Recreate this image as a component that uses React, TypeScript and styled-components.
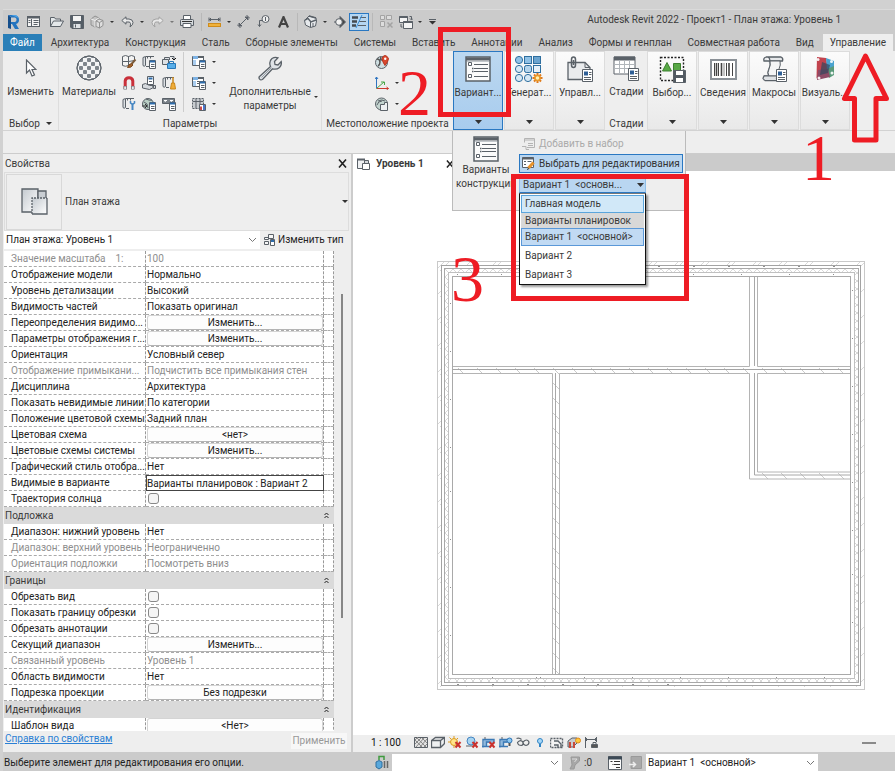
import React from 'react';
import styled, { createGlobalStyle, css } from 'styled-components';

const Global = createGlobalStyle`
  * { box-sizing: border-box; }
  html, body { margin: 0; height: 100%; }
  #root { height: 100%; }
  body, button, select, input, table {
    font-family: Roboto, "Open Sans", sans-serif;
    font-size: 10px;
    line-height: 14px;
    color: #3a3a3a;
  }
  button { border: 0; padding: 0; background: none; }
  svg { display: block; flex: none; }
`;

const INK = '#5a6168';
const RED = '#ee1c24';

/* ---------- shell ---------- */

const Shell = styled.div`
  position: relative;
  height: 100vh;
  min-height: 760px;
  display: flex;
  flex-direction: column;
  padding: 9px 0 0 3px;
  background: #d1d1d1;
  overflow: hidden;
`;
const Window = styled.div`
  flex: 1;
  min-height: 0;
  display: flex;
  flex-direction: column;
  background: #cbcbcb;
  border-top: 1px solid #dadada;
`;

/* ---------- quick access ---------- */

const QuickBar = styled.header`
  display: flex;
  align-items: center;
  height: 23px;
  padding-left: 3px;
`;
const QuickButton = styled.button<{ $w?: number; $on?: boolean }>`
  width: ${p => p.$w ?? 24}px;
  height: 18px;
  flex: none;
  display: flex;
  align-items: center;
  justify-content: center;
  ${p => p.$on && css`
    background: #b5d6f2;
    border: 1px solid #2a78c2;
  `}
`;
const Divider = styled.span`
  width: 1px;
  height: 18px;
  margin: 0 3px;
  background: #b8b8b8;
`;
const WindowTitle = styled.h1`
  flex: 1;
  margin: 0 54px 0 0;
  padding-bottom: 4px;
  text-align: right;
  white-space: nowrap;
  font-size: 10px;
  font-weight: 400;
  color: #3a3a3a;
`;

/* ---------- tabs ---------- */

const TabBar = styled.nav`
  display: flex;
  justify-content: space-between;
  max-width: 890px;
  height: 18px;
  padding-top: 1px;
  margin-right: 2px;
`;
const Tab = styled.button<{ $kind?: 'file' | 'active' }>`
  padding: 0 7px;
  white-space: nowrap;
  color: ${p => (p.$kind === 'file' ? '#fff' : '#3a3a3a')};
  background: ${p => (p.$kind === 'file' ? '#2a7fb8' : p.$kind === 'active' ? '#eee' : 'transparent')};
`;

/* ---------- ribbon ---------- */

const Ribbon = styled.section`
  position: relative;
  display: flex;
  height: 80px;
  background: #eee;
  border-bottom: 1px solid #d2d2d2;
`;
const Panel = styled.div<{ $w: number; $plain?: boolean }>`
  width: ${p => p.$w}px;
  flex: none;
  display: flex;
  flex-direction: column;
  ${p => !p.$plain && css`border-right: 1px solid #ddd;`}
`;
const PanelBody = styled.div<{ $start?: boolean }>`
  flex: 1;
  min-height: 0;
  display: flex;
  justify-content: ${p => (p.$start ? 'flex-start' : 'center')};
`;
const PanelTitle = styled.div`
  height: 14px;
  padding-top: 1px;
  display: flex;
  align-items: center;
  justify-content: center;
  gap: 6px;
  white-space: nowrap;
`;
const BigTool = styled.button<{ $w: number }>`
  width: ${p => p.$w}px;
  flex: none;
  display: flex;
  flex-direction: column;
  align-items: center;
  white-space: nowrap;
`;
const IconSlot = styled.span<{ $h?: number }>`
  height: ${p => p.$h ?? 34}px;
  display: flex;
  align-items: center;
  justify-content: center;
`;
const DropMark = styled.span`
  align-self: flex-end;
  padding: 0 0 18px 2px;
`;
const ToolGrid = styled.div<{ $cols: number }>`
  display: grid;
  grid-template-columns: repeat(${p => p.$cols}, 20px);
  grid-auto-rows: 21px;
  height: 63px;
`;
const SmallTool = styled.button<{ $w?: number }>`
  width: ${p => p.$w ?? 20}px;
  height: 21px;
  display: flex;
  align-items: center;
  justify-content: center;
  gap: 6px;
`;
const ToolRule = styled.span`
  width: 1px;
  height: 60px;
  margin: 1px 4px 0;
  background: #ccc;
`;
const ToolStack = styled.div<{ $after?: number }>`
  display: flex;
  flex-direction: column;
  margin-right: ${p => p.$after ?? 0}px;
`;
const Collapsed = styled.button<{ $on?: boolean }>`
  width: 50px;
  height: 79px;
  margin-right: 1px;
  flex: none;
  display: flex;
  flex-direction: column;
  align-items: center;
  white-space: nowrap;
  background: ${p => (p.$on ? 'linear-gradient(#bcd8f0, #a8ccee)' : 'linear-gradient(#fbfbfb, #e9e9e9)')};
  border: 1px solid ${p => (p.$on ? '#2a78c2' : '#dcdcdc')};
`;
const CollapsedLabel = styled.span`
  flex: 1;
  max-width: 48px;
`;
const ArrowSlot = styled.span`
  height: 9px;
  display: flex;
  align-items: flex-start;
`;

/* ---------- design options flyout ---------- */

const Anchor = styled.div`
  position: relative;
  flex: none;
`;
const Flyout = styled.div`
  position: absolute;
  z-index: 3;
  top: 80px;
  left: -1px;
  width: 234px;
  height: 80px;
  display: flex;
  background: #eee;
  border: 1px solid #bbb;
  border-top: 0;
`;
const FlyoutTool = styled.button`
  width: 66px;
  flex: none;
  display: flex;
  flex-direction: column;
  align-items: center;
  padding-top: 4px;
`;
const FlyoutColumn = styled.div`
  flex: 1;
  display: flex;
  flex-direction: column;
  align-items: flex-start;
  gap: 1px;
  padding-top: 3px;
`;
const FlyoutButton = styled.button<{ $on?: boolean }>`
  height: 19px;
  display: flex;
  align-items: center;
  gap: 4px;
  padding: 0 2px;
  white-space: nowrap;
  border: 1px solid ${p => (p.$on ? '#2a78c2' : 'transparent')};
  background: ${p => (p.$on ? '#b9d6f1' : 'transparent')};
  color: ${p => (p.$on ? '#333' : '#aaa')};
`;
const ComboWrap = styled.div`
  position: relative;
  width: 127px;
  margin-top: 2px;
`;
const Combo = styled.button`
  width: 100%;
  height: 17px;
  display: flex;
  align-items: center;
  justify-content: space-between;
  padding: 0 1px 0 3px;
  white-space: pre;
  background: #b9d6f1;
  border: 1px solid #8fbfe8;
  border-bottom-color: #2a78c2;
`;
const Options = styled.ul`
  position: absolute;
  top: 17px;
  left: 0;
  width: 127px;
  height: 92px;
  margin: 0;
  padding: 1px;
  list-style: none;
  background: #fff;
  border: 1px solid #111;
  border-top-color: #777;
  box-shadow: 2px 2px 2px rgba(0, 0, 0, 0.4);
`;
const Option = styled.li<{ $kind?: 'hover' | 'group' | 'current' }>`
  height: 19px;
  padding: 0 3px;
  line-height: 17px;
  white-space: pre;
  color: #3a3a3a;
  border: 1px solid transparent;
  ${p => p.$kind === 'hover' && css`height: 18px; line-height: 16px; background: #d1e8f8; border-color: #5aa5dc;`}
  ${p => p.$kind === 'group' && css`height: 15px; line-height: 13px; background: #d8d8d8;`}
  ${p => p.$kind === 'current' && css`height: 18px; line-height: 16px; background: #c1daf3; border-color: #5a98d8;`}
`;

/* ---------- workspace ---------- */

const OptionsBar = styled.div`
  height: 23px;
  flex: none;
  background: #eee;
  border-bottom: 1px solid #ccc;
`;
const Workspace = styled.main`
  flex: 1;
  min-height: 0;
  display: flex;
  background: #eee;
`;
const Palette = styled.aside`
  width: 350px;
  flex: none;
  display: flex;
  flex-direction: column;
  border-right: 2px solid #ccc;
  background: #eee;
`;
const PaletteHead = styled.div`
  height: 18px;
  display: flex;
  align-items: center;
  justify-content: space-between;
  padding: 1px 4px 0 2px;
`;
const TypeBox = styled.button`
  height: 59px;
  margin: 0 2px 0 1px;
  display: flex;
  align-items: center;
  gap: 3px;
  border: 1px solid #ddd;
`;
const Thumb = styled.span`
  width: 56px;
  height: 56px;
  margin-left: 1px;
  display: flex;
  align-items: center;
  justify-content: center;
  border: 1px solid #d8d8d8;
`;
const TypeName = styled.span`
  flex: 1;
  text-align: left;
`;
const InstanceRow = styled.div`
  height: 20px;
  display: flex;
  align-items: flex-start;
  padding-left: 1px;
`;
const SelectBox = styled.span<{ $w: number }>`
  width: ${p => p.$w}px;
  height: 18px;
  display: flex;
  align-items: center;
  background: #fff;
  padding-right: 3px;
`;
const PlainSelect = styled.select`
  flex: 1;
  appearance: none;
  border: 0;
  padding: 0 2px;
  background: transparent;
  color: #222;
`;
const EditType = styled.button`
  flex: 1;
  height: 17px;
  display: flex;
  align-items: center;
  gap: 3px;
  padding-left: 4px;
  white-space: nowrap;
  color: #222;
`;
const GridArea = styled.div`
  flex: 1;
  min-height: 0;
  display: flex;
  padding-left: 1px;
  overflow: hidden;
`;
const PropTable = styled.table`
  width: 330px;
  flex: none;
  align-self: flex-start;
  table-layout: fixed;
  border-collapse: separate;
  border-spacing: 0;
  background: #fff;
`;
const NameCell = styled.th<{ $muted?: boolean }>`
  height: 16px;
  padding: 0 0 0 7px;
  text-align: left;
  font-weight: 400;
  line-height: 14px;
  white-space: pre;
  overflow: hidden;
  color: ${p => (p.$muted ? '#8e8e8e' : '#222')};
  border-bottom: 1px dashed #aaa;
  border-right: 1px dashed #999;
`;
const ValueCell = styled.td<{ $muted?: boolean; $edit?: boolean }>`
  height: 16px;
  padding: 0 0 0 1px;
  line-height: 14px;
  white-space: nowrap;
  overflow: hidden;
  color: ${p => (p.$muted ? '#8e8e8e' : '#222')};
  border-bottom: 1px dashed #aaa;
  border-right: 1px dashed #999;
  ${p => p.$edit && css`border: 1px solid #444; padding: 0; line-height: 13px;`}
`;
const GroupCell = styled.th`
  height: 17px;
  padding: 0 5px 0 1px;
  font-weight: 400;
  background: #dadada;
`;
const GroupHead = styled.div`
  display: flex;
  justify-content: space-between;
  align-items: center;
  line-height: 15px;
`;
const ValueButton = styled.button`
  display: block;
  width: 176px;
  height: 15px;
  background: #fdfdfd;
  border: 1px solid #d4d4d4;
  border-bottom-color: #b4b4b4;
  border-radius: 3px;
  line-height: 13px;
  color: #222;
`;
const Check = styled.input`
  appearance: none;
  display: block;
  width: 11px;
  height: 11px;
  margin: 0 0 0 1px;
  border: 1px solid #888;
  border-radius: 3px;
  background: #f5f5f5;
`;
const ScrollTrack = styled.div`
  flex: 1;
  display: flex;
  justify-content: center;
  padding-top: 43px;
  padding-right: 1px;
`;
const ScrollThumb = styled.div`
  width: 2px;
  height: 324px;
  background: #868686;
`;
const PaletteFoot = styled.div`
  height: 21px;
  display: flex;
  align-items: center;
  justify-content: space-between;
  padding: 0 4px 2px 2px;
`;
const HelpLink = styled.a`
  padding-bottom: 3px;
  color: #2a7fd4;
`;
const Apply = styled.button`
  height: 16px;
  width: 56px;
  background: #f7f7f7;
  color: #999;
`;

/* ---------- document area ---------- */

const Document = styled.section`
  flex: 1;
  min-width: 0;
  display: flex;
  flex-direction: column;
`;
const DocTabs = styled.div`
  height: 17px;
  flex: none;
  display: flex;
  background: #cbcbcb;
`;
const DocTab = styled.div`
  width: 105px;
  display: flex;
  align-items: center;
  gap: 6px;
  padding: 2px 4px 0;
  background: #fff;
  font-weight: 700;
`;
const DocName = styled.span`
  flex: 1;
  font-size: 10px;
`;
const Canvas = styled.div`
  flex: 1;
  min-height: 0;
  padding: 90px 0 0 84px;
  background: #fff;
  overflow: hidden;
`;
const ViewBar = styled.div`
  height: 15px;
  margin-bottom: 2px;
  flex: none;
  display: flex;
  align-items: center;
  gap: 1px;
  padding: 0 19px 0 18px;
  background: #eee;
`;
const Scale = styled.button`
  width: 41px;
  white-space: nowrap;
  text-align: left;
  color: #111;
`;
const ViewTool = styled.button`
  width: 16px;
  height: 14px;
  flex: none;
  display: flex;
  align-items: center;
  justify-content: center;
`;
const Minus = styled.span`
  width: 14px;
  height: 2px;
  margin-left: auto;
  background: #8a8a8a;
`;

/* ---------- status ---------- */

const Status = styled.footer`
  height: 19px;
  flex: none;
  display: flex;
  align-items: center;
  padding-top: 2px;
  background: #cbcbcb;
`;
const Prompt = styled.span`
  width: 368px;
  padding: 1px 0 0 1px;
  flex: none;
  white-space: nowrap;
  color: #222;
`;
const StatusIcon = styled.span<{ $w: number }>`
  width: ${p => p.$w}px;
  flex: none;
  display: flex;
  justify-content: center;
`;
const Count = styled.span`
  width: 22px;
  flex: none;
`;

/* ---------- callouts ---------- */

const Frame = styled.div<{ $x: number; $y: number; $w: number; $h: number }>`
  position: absolute;
  z-index: 5;
  left: ${p => p.$x}px;
  top: ${p => p.$y}px;
  width: ${p => p.$w}px;
  height: ${p => p.$h}px;
  border: 5px solid ${RED};
  pointer-events: none;
`;
const Step = styled.span<{ $x: number; $y: number }>`
  position: absolute;
  z-index: 5;
  left: ${p => p.$x}px;
  top: ${p => p.$y}px;
  font: 66px/46px "Liberation Serif", serif;
  color: ${RED};
`;
const ArrowMark = styled.svg`
  position: absolute;
  z-index: 5;
  left: 841px;
  top: 52px;
`;

/* ---------- icons ---------- */

type IconProps = { w: number; h: number; vb?: string; children: React.ReactNode };
const Icon = ({ w, h, vb, children }: IconProps) => (
  <svg width={w} height={h} viewBox={vb ?? `0 0 ${w} ${h}`} fill="none" stroke={INK} aria-hidden="true">
    {children}
  </svg>
);

const Caret = ({ w = 4, c = '#333' }: { w?: number; c?: string }) => (
  <svg width={w} height={Math.ceil(w / 2)} viewBox="0 0 8 4" preserveAspectRatio="none" aria-hidden="true">
    <path d="M0 0h8L4 4z" fill={c} />
  </svg>
);
const Chevron = () => (
  <Icon w={9} h={6}><path d="M1 1l3.500 3.500L8 1" stroke="#777" /></Icon>
);
const Cross = ({ s = 9 }: { s?: number }) => (
  <Icon w={s} h={s} vb="0 0 9 9"><path d="M1 0.500l7 8M8 0.500l-7 8" stroke="#222" strokeWidth="1.600" /></Icon>
);

const RevitLogo = () => (
  <Icon w={13} h={16}>
    <g stroke="none">
      <path d="M1 1l3 2v12l-3-1z" fill="#164f8c" />
      <path d="M1 1h7q4 1 4 5 0 3-3 4l3 5H8l-3-5H4V3z" fill="#2474bf" />
      <path d="M4 3.500h4q1.500.500 1.500 2.200T8 8H4z" fill="#cbcbcb" />
      <path d="M4 1h5l3 3-2-.500-2-1z" fill="#4ea3e6" />
    </g>
  </Icon>
);
const HomeList = () => (
  <Icon w={13} h={13}>
    <rect x=".500" y="1.500" width="12" height="10" fill="#f5f5f5" />
    <path d="M1 2.500h11" strokeWidth="2" />
    <path d="M4.500 4v7M6.500 5.500h5M6.500 7.500h5M6.500 9.500h4M1.500 5.500h2M1.500 7.500h2" />
  </Icon>
);
const OpenFolder = () => (
  <Icon w={14} h={12}><path d="M.500 10.500V1.500h4l1 1.500h5v2M.500 10.500L3.500 5h10l-3 5.500z" fill="#e4e8ea" /></Icon>
);
const Save = () => (
  <Icon w={14} h={14}>
    <path d="M.500.500h13v13H2l-1.500-1.500z" fill="#555e67" />
    <rect x="3" y="1" width="8" height="5" fill="#f4f4f4" stroke="none" />
    <rect x="3.500" y="9" width="7" height="4" fill="#dfe3e6" stroke="none" />
    <path d="M5.500 9.500v3" />
  </Icon>
);
const Cubes = () => (
  <Icon w={14} h={14}>
    <g stroke="#929292">
      <path d="M1 4l4-3 4 2v6l-4 3-4-2z" fill="#c4c4c4" />
      <path d="M1 4l4 1.500L9 3M5 5.500V12" stroke="#eee" />
      <path d="M6 6l3-2 4 1.500v5L9.500 13 6 11.500z" fill="#dedede" />
      <path d="M6 6l3.500 1.500L13 5.500M9.500 7.500V13" />
    </g>
  </Icon>
);
const Undo = ({ c = INK, flip }: { c?: string; flip?: boolean }) => (
  <Icon w={13} h={12}>
    <path
      transform={flip ? 'matrix(-1 0 0 1 13 0)' : undefined}
      d="M5 .800L.800 4.500 5 8.200V6h3q2.500.300 1 5 3-2 3-4.500 0-3-4-3.500H5z"
      fill="#e8e8e8" stroke={c}
    />
  </Icon>
);
const Printer = () => (
  <Icon w={14} h={13}>
    <path d="M3.500 5V.500h7V5" fill="#fff" />
    <path d="M.500 5.500q0-1 1-1h11q1 0 1 1v5H.500z" fill="#d6dadd" />
    <path d="M3 8.500h8v4H3z" fill="#fff" />
    <path d="M2 6.500h10" stroke="#333" />
  </Icon>
);
const Measure = () => (
  <Icon w={13} h={10}>
    <path d="M1 2.500h11M1 .500v4M12 .500v4M3 1L1.500 2.500 3 4M10 1l1.500 1.500L10 4" />
    <rect x=".500" y="6.500" width="12" height="3" fill="#f0b23c" stroke="#cf8c1c" />
  </Icon>
);
const AlignDim = () => (
  <Icon w={13} h={13}><path d="M2 11L11 2M0 9.500l3.500 3.500M9.500 0L13 3.500" /><path d="M2 8v3h3zM11 2H8l3 3z" fill={INK} /></Icon>
);
const TagIcon = () => (
  <Icon w={13} h={13}><circle cx="8.500" cy="4" r="3.500" fill="#eee" /><path d="M8.500 2v4M5 5.500H2.500v6M1 9.500l1.500 2L4 9.500" /></Icon>
);
const TextA = () => (
  <Icon w={11} h={12}><path d="M1 11.500L5.500 1 10 11.500M2.500 8h6" stroke="#444" strokeWidth="2.200" /></Icon>
);
const HouseIcon = () => (
  <Icon w={13} h={13}>
    <path d="M.500 5.500L5 1l7 2 .500 3-1 5-5 1.500L1.500 10z" fill="#e6e9ec" />
    <path d="M.500 5.500l3.500-2 3 3.500L12 5M5 1l7 2" strokeWidth="1.400" /><path d="M6.500 7v5.500M9 8v4" />
  </Icon>
);
const SectionMark = () => (
  <Icon w={12} h={12}><path d="M6 .500l5.500 5.500L6 11.500z" fill="#444" /><circle cx="5" cy="6" r="3.300" fill="#f2f2f2" /><path d="M0 6h2" /></Icon>
);
const ThinLines = () => (
  <Icon w={14} h={13}>
    <path d="M0 2.500h6M0 6.500h5M0 10.500h4" strokeWidth="2.500" stroke="#444b52" />
    <path d="M8 2.500h6M7 6.500h7M6 10.500h8" />
    <path d="M10 0L4 13" stroke="#3a8fd8" />
  </Icon>
);
const CloseHidden = () => (
  <Icon w={13} h={13}>
    <g stroke="#a3a3a3">
      <path d="M.500.500h4v4h-4zM6.500.500h5v4h-5zM.500 6.500h4v5h-4z" fill="#ddd" />
      <path d="M7.500 7.500l5 5M12.500 7.500l-5 5" strokeWidth="1.500" />
    </g>
  </Icon>
);
const SwitchWin = () => (
  <Icon w={14} h={14}>
    <path d="M.500 1.500h8v6h-8z" fill="#f4f4f4" /><path d="M.500 2h8" strokeWidth="2" />
    <path d="M4.500 6.500h9v7h-9z" fill="#f4f4f4" /><path d="M4.500 7h9" strokeWidth="2" />
    <path d="M10.500 1.500h2v3M11 3.500l1.500 1.500L14 3.500M2 9v3h1.500" />
  </Icon>
);

const Cursor = () => (
  <Icon w={12} h={19}><path d="M1.500 1v13l3-3 2.500 6 2.500-1-2.500-5.500H11z" fill="#fff" strokeWidth="1.200" /></Icon>
);
const Sphere = () => (
  <Icon w={26} h={26}>
    <defs><clipPath id="ball"><circle cx="13" cy="13" r="12" /></clipPath></defs>
    <circle cx="13" cy="13" r="12" fill="#f3f4f5" />
    <g clipPath="url(#ball)" stroke="none" fill="#7d848b">
      {[0, 1, 2, 3, 4, 5, 6].map(r =>
        [0, 1, 2, 3].map(c => {
          const xs = [0, 3, 7, 11, 15, 19, 23, 26];
          const i = c * 2 + (r % 2);
          return i < 7 && <rect key={`${r}-${c}`} x={xs[i]} y={xs[r]} width={xs[i + 1] - xs[i]} height={xs[r + 1] - xs[r]} rx="1" />;
        }),
      )}
    </g>
    <circle cx="13" cy="13" r="12" />
  </Icon>
);
const sheet = <><path d="M7.500 5.500h6v8h-6z" fill="#fff" /><path d="M8 6.500h5" stroke="#2e6cab" strokeWidth="2" /><path d="M9 9.500h3.500M9 11.500h3.500" /></>;
const ruler = <path d="M1 2.500l2.500-1v9q-1.500 1.500-2.500 0zM4 1.500h8M5.500 1.500v2M8.500 1.500v2M4 11.500h3" fill="#dce0e4" />;
const ObjStyles = () => (
  <Icon w={15} h={15}>
    <path d="M.500 2.500q3-2 6 0v5h-6zM6.500 2.500q3-2 6 0v4l-6 1zM.500 7.500h6v4q-3 1.500-6 0z" fill="#f3f3f3" />
    <path d="M13.500 5.500L9.500 10" stroke="#7c5a3a" strokeWidth="2" />
    <path d="M9.500 9.500q-3 .500-4 4 4 .500 5.500-2.500z" fill="#a3622c" stroke="#7c4a20" />
  </Icon>
);
const ProjInfo = () => <Icon w={14} h={14}>{ruler}{sheet}</Icon>;
const ProjParams = () => (
  <Icon w={14} h={14}>
    <path d="M.500 4.500h6v5h-6zM2.500 4V2.500h5V5M8 1.500h4v3" fill="#dde1e5" />
    <path d="M10 3l2 2 2-2" stroke="#111" />
    <path d="M5.500 8.500h8v5h-8z" fill="#58aee9" stroke="#2878b8" /><path d="M7.500 8.500v-2h4v2" stroke="#2878b8" />
  </Icon>
);
const Magnet = () => (
  <Icon w={12} h={14}>
    <path d="M2.200 13V5Q2.500 1.800 6 1.800T9.800 5v8" stroke="#c9303a" strokeWidth="3" />
    <path d="M2.200 10V13.500M9.800 10V13.500" stroke="#6d747b" strokeWidth="3.400" />
    <path d="M2.200 10.500V13M9.800 10.500V13" stroke="#e6e9eb" strokeWidth="2" />
  </Icon>
);
const SharedParams = () => (
  <Icon w={14} h={14}>
    <path d="M5.500.500h6v8h-6z" fill="#fff" /><path d="M6.500 2.500h4" stroke="#2e6cab" strokeWidth="2" /><path d="M7 5.500h3" />
    <path d="M.500 8.500l3-1 4 2h4v2l-4 2-7-1.500zM10.500 9.500h3v3h-2z" fill="#d5d9dd" />
  </Icon>
);
const Purge = () => (
  <Icon w={14} h={14}>{ruler}<path d="M9.500 7h3l1 6H8.500z" fill="#f0ad38" stroke="#c9861a" /><path d="M11 1v6" stroke="#c9861a" strokeWidth="1.500" /></Icon>
);
const Units = () => (
  <Icon w={14} h={14}>{ruler}<path d="M10.500 7v6" stroke="#4686c2" strokeWidth="2" /><path d="M8.500 4v2q2 2 4 0V4" stroke="#4686c2" strokeWidth="1.500" /></Icon>
);
const Transfer = () => (
  <Icon w={14} h={14}><circle cx="6" cy="7" r="5.500" fill="#b9cfc4" /><path d="M2 5q4 1 4 6M4 2q4 2 6 1" /><path d="M0 9h4M3 7l2 2-2 2" stroke="#333" />{sheet}</Icon>
);
const Templates = () => (
  <Icon w={14} h={14}><path d="M.500 1.500h12v5H.500z" fill="#7a8188" /><path d="M2 3.500h3M8 3.500h3M3 5l1-2M9 5l1-2" stroke="#fff" />{sheet}</Icon>
);
const TableTool = ({ v }: { v: number }) => (
  <Icon w={14} h={14}>
    {v < 2 ? (
      <>
        <path d="M.500 1.500h11v9H.500z" fill="#fff" />
        <path d="M1 2.500h5" stroke="#7db2e4" strokeWidth="3" />
        <path d="M6 2h6" strokeWidth="2" /><path d="M2.500 5v5" stroke="#a9cdf0" strokeWidth="3" />
        {v === 1 && <path d="M5 5.500h3M5 7.500h2" />}
        {sheet}
      </>
    ) : (
      <>
        <path d="M.500 1.500h11v10H.500z" fill="#c8ccd0" strokeDasharray="2 1" /><path d="M1 4.500h10M4 2v9M8 2v9" />
        <path d="M7.500 7.500h6v6h-6z" fill="#fff" /><path d="M9 13V9.500" stroke="#c94a4a" strokeWidth="2" /><path d="M12 13v-5" stroke="#4a74c9" strokeWidth="2" />
      </>
    )}
  </Icon>
);
const Wrench = () => (
  <Icon w={24} h={25}>
    <path d="M1.500 20.500L12.500 10.500Q10.500 5.500 14 2.500 17 .500 20 1.800L16.500 5.500l.500 3 3 .500 3.200-3.500Q24 9 21.500 11.500q-3 2.500-7 1.300L4.500 23.500q-2 1-3-.500-1-1.200 0-2.500z" fill="#dfe3e7" strokeWidth="1.300" />
    <path d="M3.500 21.500L13.500 11.500" stroke="#9aa1a8" />
  </Icon>
);
const Globe = () => (
  <Icon w={14} h={14}>
    <circle cx="6.500" cy="7.500" r="6" fill="#cfdfe2" /><path d="M2 4q3 0 3 3t-2 4M6 2q-1 3 1 3" stroke="#555" strokeWidth="1.500" />
    <path d="M10 10.500Q7 6 7 3.500 8 .500 10 .500T13.500 3.500Q13.500 6 10 10.500z" fill="#d9482e" stroke="#b83520" /><circle cx="10.200" cy="3.800" r="1.200" fill="#fff" stroke="none" />
  </Icon>
);
const Axes = () => (
  <Icon w={14} h={14}>
    <path d="M1.500 12V1M0 3l1.500-2L3 3" stroke="#2f74c0" /><path d="M1.500 12.500h12M11.500 11l2 1.500-2 1.500" stroke="#cc3b2f" />
    <path d="M1.500 12.500L9 6M6 6h3.500v3" stroke="#49a84a" />
  </Icon>
);
const PositionIcon = () => (
  <Icon w={14} h={14}><circle cx="6.500" cy="7" r="6" fill="#c3d4cf" /><path d="M2 8q1-4 5-4M3 4q4-2 7 0" /><path d="M5.500 7.500h4v-2h3v8h-7z" fill="#eef0f2" /></Icon>
);

const OptionSheet = ({ w = 26, h = 26 }: { w?: number; h?: number }) => (
  <Icon w={w} h={h} vb="0 0 26 26">
    <path d="M1 1h24v24H1z" fill="#fbfbfb" strokeWidth="1.500" />
    <path d="M1 3h24" strokeWidth="3" /><path d="M2 5.500h22" stroke="#c3c8cc" />
    <path d="M3.500 6.500h3v3h-3zM3.500 18.500h3v3h-3z" fill="#fff" />
    <path d="M9 8.500h14M9 12.500h14M9 15.500h14M9 20.500h14" strokeWidth="1.200" />
    <path d="M7 12.500h1.500M7 15.500h1.500" strokeWidth="1.500" />
  </Icon>
);
const StatusSheet = () => (
  <Icon w={14} h={14}>
    <path d="M.500.500h13v13H.500z" fill="#fbfbfb" /><path d="M0 2h14" strokeWidth="3" stroke="#3c4a56" />
    <path d="M2.500 5.500h2M6 5.500h6M6 8.500h6M8 11.500h4M4.500 8.500h1" stroke="#333" />
  </Icon>
);
const Generative = () => (
  <Icon w={28} h={27}>
    <g fill="#8fc1e6" stroke="#2f6f9f">
      {[4, 13].flatMap(x => [4, 13, 22].map(y => <circle key={`${x}${y}`} cx={x} cy={y} r="3.600" fill={y > 4 ? '#d6e8f5' : '#8fc1e6'} />))}
      <rect x="9.500" y=".500" width="7" height="7" />
      <rect x="18.500" y=".500" width="7" height="7" fill="#6ba4cf" />
      <rect x="18.500" y="9.500" width="7" height="7" fill="#e6f0f8" />
      <rect x="9.500" y="9.500" width="7" height="7" rx="2" fill="#b4d4ec" />
    </g>
    <g stroke="#e07b1c" strokeWidth="2"><path d="M22.500 17v10M17.500 22h10M19 18.500l7 7M26 18.500l-7 7" /><circle cx="22.500" cy="22" r="2.500" fill="#fff2b0" stroke="#e89a2c" strokeWidth="1.500" /></g>
  </Icon>
);
const report = <><path d="M15.500 13.500h10v12h-10z" fill="#fff" /><path d="M17 15.500h4v4h-4z" fill="#2e5f96" stroke="none" /><path d="M22 16.500h2.500M22 18.500h2.500M17 21.500h7M17 23.500h7" /></>;
const ManageProject = () => (
  <Icon w={27} h={27}>
    <path d="M1 6.500h17l5 5v12H1z" fill="#e9ebed" strokeWidth="1.300" /><path d="M18 6.500v5h5" />
    <path d="M4.500 9V3.500Q4.500 1 6.500 1t2 2.500V9q0 2.500-2 2.500T4.500 9zM6.500 4v5" strokeWidth="1.500" />
    {report}
  </Icon>
);
const Phases = () => (
  <Icon w={27} h={27}>
    <path d="M1 2h21v17H1z" fill="#fff" /><path d="M1 3.500h21" strokeWidth="4" />
    <path d="M1 9.500h21M1 13.500h21M6.500 5v14M11.500 5v14M16.500 5v14" stroke="#b0b5ba" />
    {report}
  </Icon>
);
const Selection = () => (
  <Icon w={27} h={27}>
    <path d="M1.500 1.500h23v23h-23z" stroke="#222" strokeWidth="1.400" strokeDasharray="2 1.500" />
    <path d="M8 6.500l4.500 8.500h-9z" fill="#58a846" stroke="#3d8030" /><path d="M14.500 7.500h7v7h-7z" fill="#58a846" stroke="#3d8030" />
    <path d="M14.500 14.500h12v12h-12z" fill="#525a62" /><path d="M17 15h7v4h-7zM17 22h7v4h-7z" fill="#fff" stroke="none" />
  </Icon>
);
const Barcode = () => (
  <Icon w={27} h={21}>
    <path d="M1 1h25v19H1z" fill="#fff" stroke="#8b9197" strokeWidth="2" />
    <path d="M4.500 4v13M8.500 4v13M16.500 4v13M22.500 4v13" stroke="#444" /><path d="M6.500 4v13M11.500 4v13M19 4v13" stroke="#444" strokeWidth="1.600" /><path d="M14 4v13" stroke="#888" />
  </Icon>
);
const Macros = () => (
  <Icon w={27} h={27}>
    <path d="M5 1h15q2.500 1 1.500 4H9q1 4-1 8t0 7H3q-2 3 1 4.500h12M5 1Q2 2 3 5h6M9 5q0-3-2-4" fill="#e6e8ea" strokeWidth="1.300" />
    <path d="M9 5h10q1 4-1 8l-2 7H8q-2-3 0-7t1-8z" fill="#f4f5f6" />
    <path d="M3 20h13q-1.500 3 .500 4.500H4Q1 23 3 20z" fill="#dfe2e5" />
    {report}
  </Icon>
);
const Dynamo = () => (
  <Icon w={21} h={26}>
    <g stroke="none">
      <path d="M2 1l9 1 2 11-10 11-1.500-2z" fill="#c2434e" /><path d="M11 2l8 3v6l-7 3z" fill="#4aa3cf" /><path d="M12 13l7-3v9l-5 3z" fill="#5a9a7a" />
      <path d="M2 24l1-10 10-1 2 8z" fill="#8d4a66" /><path d="M7 6l8 3-2 8-8 2z" fill="#33465c" opacity=".700" />
      <g fill="#fff" opacity=".900"><circle cx="3" cy="3.500" r="1.500" /><circle cx="16.500" cy="5.500" r="1.500" /><circle cx="17" cy="17" r="1.500" /><circle cx="4" cy="22" r="1.500" /></g>
    </g>
  </Icon>
);

const AddToSet = () => (
  <Icon w={13} h={12}><g stroke="#b4b4b4"><path d="M2.500.500h10v9H5M2.500.500v4M2.500 2h10M6 5.500h5M6 7.500h5" /><path d="M0 8.500h4v3h3" /></g></Icon>
);
const PickToEdit = () => (
  <Icon w={13} h={13}>
    <path d="M.500.500h11v10H.500z" fill="#fff" /><path d="M.500 1.500h11" strokeWidth="2" /><path d="M2 4.500h2M5.500 4.500h4M2 7.500h2" />
    <path d="M11.500 5.500L6.500 11" stroke="#e8932c" strokeWidth="3" /><path d="M5 12.500l2-1" stroke="#333" />
  </Icon>
);
const PlanThumb = () => (
  <Icon w={27} h={27}>
    <defs><linearGradient id="pl" x1="0" y1="0" x2="1" y2="1"><stop offset="0" stopColor="#c3c9cf" /><stop offset="1" stopColor="#fff" /></linearGradient></defs>
    <path d="M1 1h16v23H1z" fill="url(#pl)" strokeWidth="1.300" /><path d="M17 3h8v8h-8z" fill="#c9ced3" strokeWidth="1.300" />
    <path d="M11 10h15v16H11z" fill="url(#pl)" stroke="none" />
    <path d="M11 26V10h15" strokeDasharray="2 1" strokeWidth="1.300" /><path d="M26 10v16H11" strokeWidth="1.300" />
  </Icon>
);
const PlanTab = () => (
  <Icon w={13} h={12}><path d="M.500 1.500h7v9h-7z" fill="#eef0f2" /><path d="M7.500 2.500h4v4h-4z" fill="#d4d8dc" /><path d="M5.500 5.500h7v6h-7z" fill="#fff" /><path d="M0 1.500h8" strokeWidth="2" /></Icon>
);
const TypeIcon = () => (
  <Icon w={11} h={12}><path d="M.500 3.500h4v2h-4zM.500 7.500h4v3h-4zM4.500.500h5v4h-5z" fill="#f6f6f6" /><path d="M6.500 5.500h4v6h-4z" fill="#fff" /><path d="M7 7h3" stroke="#2e6cab" strokeWidth="2" /></Icon>
);
const GroupChevron = () => (
  <Icon w={5} h={7}><path d="M.500 3L2.500 1l2 2M.500 6l2-2 2 2" stroke="#222" /></Icon>
);

const redX = <path d="M7.500 6l5 5.500M12.500 6l-5 5.500" stroke="#c9302c" strokeWidth="2" />;
const crop = <><path d="M1 4h11v3H5v4H2V5" fill="#8fb9de" stroke="none" /><path d="M1 11.500V3.500h11V6M0 10.500h9M4.500 11V6H8" stroke="#3c79b4" strokeWidth="1.400" /><path d="M3 1v2" /></>;
const bulb = <><circle cx="10.500" cy="4.500" r="2.500" fill="#8cc8f2" stroke="#2f74b5" /><path d="M10.500 7v3" stroke="#555" strokeWidth="2" /></>;
const viewIcons: React.ReactNode[] = [
  <><path d="M.500 1.500h13v10H.500z" fill="#e2e2e2" /><path d="M1 4l3-3M1 8l6-6M2 11l8-9M6 11l7-8M10 11l3-3M3 2l9 9M1 4l7 7M8 2l5 5" stroke="#8a8a8a" /></>,
  <path d="M.500 4.500l4-3h9v6l-4 4h-9zM.500 4.500h9l4-3M9.500 4.500v7" fill="#eef0f1" strokeWidth="1.300" />,
  <><circle cx="6" cy="6" r="3.500" fill="#ffe48a" stroke="#dd9a1a" /><path d="M6 0v2M6 10v2M0 6h2M1.500 1.500L3 3M10 2L9 3" stroke="#dd9a1a" />{redX}</>,
  <><circle cx="6" cy="5" r="4" fill="#a8d4f0" stroke="#4686c2" /><path d="M1 10h7" />{redX}</>,
  <>{crop}{redX}</>,
  <>{crop}{bulb}</>,
  <path d="M.500 2.500q3-1 5 1M1.500 6.500q2-3 5-1 1.500 3-1 4-3.500 0-4-3zM7 6q4-4 6 0 0 3-3 3.500Q7 9 7 6" strokeWidth="1.200" />,
  <><circle cx="7" cy="5" r="2.500" fill="#a8d8f8" stroke="#2f84c5" /><path d="M7 8v3" stroke="#2f84c5" strokeWidth="2" /></>,
  <><path d="M.500 2.500h12v9H.500z" fill="#f3f3f3" strokeWidth="1.400" strokeDasharray="2 1" /><path d="M4 5h4l3 3v4M4 9h4v3" strokeWidth="1.400" /></>,
  <><path d="M1 5l4-3h5v5l-4 4H1z" fill="#c8ccd0" /><path d="M3 6v6M7 6v6" stroke="#c94a3a" strokeWidth="2" /><circle cx="11" cy="4.500" r="2.500" fill="#ffc93c" stroke="#e08a1a" /></>,
  <><path d="M1 3.500h12M1.500 1v11M12.500 1v5M3 2L1.500 3.500 3 5M11 2l1.500 1.500L11 5" /><path d="M7.500 8.500h6v3h-6z" fill="#555" /><path d="M9 8V6.500h3V8" /></>,
];
const StatusHand = () => (
  <Icon w={14} h={15}><path d="M1 7l3-1.500L7 7v5l-3 2-3-2z" fill="#59a8dc" stroke="#2f6f9f" /><path d="M4 5V1.500h5V5" stroke="#3f9a3f" strokeWidth="1.500" /><path d="M9.500 6v7M12.500 6v7" stroke="#666" strokeWidth="1.500" /></Icon>
);
const FilterOff = () => (
  <Icon w={13} h={14}><path d="M4 1h8.500v4L8 9l-1 4H3l2-4z" fill="#a7a7a7" stroke="#999" /><path d="M5 3h5L7.500 6" stroke="#ddd" /></Icon>
);
const PickStatus = () => (
  <Icon w={13} h={13}><path d="M2 .500h10.500v12H2z" fill="#a9a9a9" stroke="#9a9a9a" /><path d="M0 8.500h6M4 6l2.500 2.500L4 11" stroke="#eee" strokeWidth="1.500" /></Icon>
);

const FloorPlan = () => {
  const rings: [number, string][] = [[0.5, '#c9c9c9'], [4.5, '#a3a3a3'], [7.5, '#a8a8a8'], [11.5, '#c0c0c0'], [15.5, '#a9a9a9']];
  return (
    <svg width="429" height="430" viewBox="0 0 429 430" fill="none" role="img" aria-label="План этажа">
      <defs>
        <pattern id="brick" width="26" height="26" patternUnits="userSpaceOnUse">
          <path d="M0 8L8 0M3 10l9-9M14 24l9-9M17 26l9-9" stroke="#cfcfcf" strokeWidth=".800" />
        </pattern>
        <pattern id="wool" width="8" height="8" patternUnits="userSpaceOnUse">
          <path d="M0 0l8 8M8 0L0 8" stroke="#cfcfcf" strokeWidth=".800" />
        </pattern>
        <pattern id="thin" width="19" height="15" patternUnits="userSpaceOnUse">
          <path d="M2 2l7 7" stroke="#bcbcbc" strokeWidth=".800" />
        </pattern>
      </defs>
      <path fillRule="evenodd" fill="url(#brick)" d="M0 0h429v430H0zM4 4v421h420V4z" />
      <path fillRule="evenodd" fill="url(#wool)" d="M7 7h415v415H7zM11 11v407h406V11z" />
      {rings.map(([o, c], i) => (
        <rect key={i} x={o} y={o} width={428 - 2 * o + (i > 1 ? 1 : 0)} height={429 - 2 * o} stroke={c} />
      ))}
      <g fill="#8f8f8f">
        {Array.from({ length: 34 }, (_, i) => {
          const t = 20 + ((i * 83) % 380);
          return <React.Fragment key={i}>
            {i % 4 === 0 && <rect x={t} y={13} width="1" height="1" />}
            {i % 4 === 1 && <rect x={t} y={416} width="1" height="1" />}
            {i % 4 === 2 && <rect x={13} y={t} width="1" height="1" />}
            {i % 4 === 3 && <rect x={415} y={t} width="1" height="1" />}
            {i % 5 === 0 && <rect x={t} y={423} width="2" height="1" />}
            {i % 5 === 2 && <rect x={t} y={5} width="2" height="1" />}
          </React.Fragment>;
        })}
      </g>
      <g fill="url(#thin)">
        <path d="M16 105h397v7H16zM115 112h8v301h-8zM312 16h9v89h-9zM312 112h9v106h-9zM312 211h101v7H312z" />
      </g>
      <g stroke="#b4b4b4">
        <path d="M16 105.500h296.500V16M320.500 16v89.500H413M16 112.500h99.500V413M122.500 413V112.500h190v105.500H413M413 112.500h-92.500v98.500H413" />
        <path d="M16 108.500h397" stroke="#a5a5a5" /><path d="M118.500 112v301M317.500 16v89M317.500 112v102H413" stroke="#a8a8a8" />
      </g>
    </svg>
  );
};

/* ---------- data ---------- */

type Row = { group?: string; name?: string; value?: string; kind?: 'button' | 'check' | 'edit'; muted?: boolean };
const rows: Row[] = [
  { name: 'Значение масштаба    1:', value: '100', muted: true },
  { name: 'Отображение модели', value: 'Нормально' },
  { name: 'Уровень детализации', value: 'Высокий' },
  { name: 'Видимость частей', value: 'Показать оригинал' },
  { name: 'Переопределения видимо...', value: 'Изменить...', kind: 'button' },
  { name: 'Параметры отображения г...', value: 'Изменить...', kind: 'button' },
  { name: 'Ориентация', value: 'Условный север' },
  { name: 'Отображение примыкани...', value: 'Подчистить все примыкания стен', muted: true },
  { name: 'Дисциплина', value: 'Архитектура' },
  { name: 'Показать невидимые линии', value: 'По категории' },
  { name: 'Положение цветовой схемы', value: 'Задний план' },
  { name: 'Цветовая схема', value: '<нет>', kind: 'button' },
  { name: 'Цветовые схемы системы', value: 'Изменить...', kind: 'button' },
  { name: 'Графический стиль отобра...', value: 'Нет' },
  { name: 'Видимые в варианте', value: 'Варианты планировок : Вариант 2', kind: 'edit' },
  { name: 'Траектория солнца', kind: 'check' },
  { group: 'Подложка' },
  { name: 'Диапазон: нижний уровень', value: 'Нет' },
  { name: 'Диапазон: верхний уровень', value: 'Неограниченно', muted: true },
  { name: 'Ориентация подложки', value: 'Посмотреть вниз', muted: true },
  { group: 'Границы' },
  { name: 'Обрезать вид', kind: 'check' },
  { name: 'Показать границу обрезки', kind: 'check' },
  { name: 'Обрезать аннотации', kind: 'check' },
  { name: 'Секущий диапазон', value: 'Изменить...', kind: 'button' },
  { name: 'Связанный уровень', value: 'Уровень 1', muted: true },
  { name: 'Область видимости', value: 'Нет' },
  { name: 'Подрезка проекции', value: 'Без подрезки', kind: 'button' },
  { group: 'Идентификация' },
  { name: 'Шаблон вида', value: '<Нет>', kind: 'button' },
];
const tabs = ['Архитектура', 'Конструкция', 'Сталь', 'Сборные элементы', 'Системы', 'Вставить', 'Аннотации', 'Анализ', 'Формы и генплан', 'Совместная работа', 'Вид'];
const gridTools = [ObjStyles, ProjInfo, ProjParams, Magnet, SharedParams, Purge, Units, Transfer, Templates];

const CollapsedPanel = ({ label, icon, on }: { label: string; icon: React.ReactNode; on?: boolean }) => (
  <Collapsed $on={on}>
    <IconSlot>{icon}</IconSlot>
    <CollapsedLabel>{label}</CollapsedLabel>
    <ArrowSlot><Caret w={7} /></ArrowSlot>
  </Collapsed>
);

const PropertyRow = ({ row, id }: { row: Row; id: string }) => {
  if (row.group) {
    return <tr><GroupCell colSpan={3}><GroupHead>{row.group}<GroupChevron /></GroupHead></GroupCell></tr>;
  }
  return (
    <tr>
      <NameCell scope="row" id={id} $muted={row.muted}>{row.name}</NameCell>
      <ValueCell $muted={row.muted} $edit={row.kind === 'edit'}>
        {row.kind === 'button' && <ValueButton aria-describedby={id}>{row.value}</ValueButton>}
        {row.kind === 'check' && <Check type="checkbox" aria-labelledby={id} />}
        {(!row.kind || row.kind === 'edit') && row.value}
      </ValueCell>
      <ValueCell />
    </tr>
  );
};

export default function App() {
  return (
    <Shell>
      <Global />
      <Window>
        <QuickBar>
          <QuickButton $w={15} aria-label="Revit"><RevitLogo /></QuickButton>
          <QuickButton $w={25} aria-label="Главная"><HomeList /></QuickButton>
          <QuickButton $w={21} aria-label="Открыть"><OpenFolder /></QuickButton>
          <QuickButton $w={20} aria-label="Сохранить"><Save /></QuickButton>
          <QuickButton $w={20} aria-label="Синхронизация"><Cubes /></QuickButton>
          <QuickButton $w={10} aria-label="Ещё"><Caret /></QuickButton>
          <QuickButton $w={20} aria-label="Отменить"><Undo /></QuickButton>
          <QuickButton $w={9} aria-label="Список отмены"><Caret /></QuickButton>
          <QuickButton $w={22} aria-label="Повторить"><Undo flip c="#a3a3a3" /></QuickButton>
          <QuickButton $w={8} aria-label="Список повтора"><Caret c="#777" /></QuickButton>
          <QuickButton $w={22} aria-label="Печать"><Printer /></QuickButton>
          <Divider />
          <QuickButton $w={18} aria-label="Измерить"><Measure /></QuickButton>
          <QuickButton $w={11} aria-label="Способы измерения"><Caret /></QuickButton>
          <QuickButton $w={19} aria-label="Размер"><AlignDim /></QuickButton>
          <QuickButton $w={20} aria-label="Марка"><TagIcon /></QuickButton>
          <QuickButton $w={21} aria-label="Текст"><TextA /></QuickButton>
          <Divider />
          <QuickButton $w={18} aria-label="3D вид"><HouseIcon /></QuickButton>
          <QuickButton $w={11} aria-label="Список видов"><Caret /></QuickButton>
          <QuickButton $w={19} aria-label="Разрез"><SectionMark /></QuickButton>
          <QuickButton $w={20} $on aria-label="Тонкие линии"><ThinLines /></QuickButton>
          <Divider />
          <QuickButton $w={20} aria-label="Закрыть скрытые"><CloseHidden /></QuickButton>
          <QuickButton $w={20} aria-label="Переключить окна"><SwitchWin /></QuickButton>
          <QuickButton $w={8} aria-label="Список окон"><Caret /></QuickButton>
          <QuickButton $w={16} aria-label="Настроить панель">
            <Icon w={7} h={7}><path d="M0 1.500h7" /><path d="M0 3h7L3.500 6.500z" fill="#333" stroke="none" /></Icon>
          </QuickButton>
          <WindowTitle>Autodesk Revit 2022 - Проект1 - План этажа: Уровень 1</WindowTitle>
        </QuickBar>

        <TabBar>
          <Tab $kind="file">Файл</Tab>
          {tabs.map(t => <Tab key={t}>{t}</Tab>)}
          <Tab $kind="active">Управление</Tab>
        </TabBar>

        <Ribbon>
          <Panel $w={56}>
            <PanelBody>
              <BigTool $w={54}><IconSlot><Cursor /></IconSlot>Изменить</BigTool>
            </PanelBody>
            <PanelTitle>Выбор <Caret w={6} /></PanelTitle>
          </Panel>
          <Panel $w={263}>
            <PanelBody $start>
              <BigTool $w={60}><IconSlot><Sphere /></IconSlot>Материалы</BigTool>
              <ToolGrid $cols={3}>
                {gridTools.map((G, i) => <SmallTool key={i} aria-label={`Параметр ${i + 1}`}><G /></SmallTool>)}
              </ToolGrid>
              <ToolRule />
              <ToolStack $after={8}>
                {[0, 1, 2].map(v => <SmallTool key={v} $w={32} aria-label={`Шаблон ${v + 1}`}><TableTool v={v} /><Caret /></SmallTool>)}
              </ToolStack>
              <BigTool $w={84}>
                <IconSlot><Wrench /></IconSlot>Дополнительные<br />параметры
              </BigTool>
              <DropMark><Caret /></DropMark>
            </PanelBody>
            <PanelTitle>Параметры</PanelTitle>
          </Panel>
          <Panel $w={131} $plain>
            <PanelBody>
              <ToolStack $after={2}>
                <SmallTool $w={18} aria-label="Местоположение"><Globe /></SmallTool>
                <SmallTool $w={28} aria-label="Координаты"><Axes /><Caret /></SmallTool>
                <SmallTool $w={28} aria-label="Положение"><PositionIcon /><Caret /></SmallTool>
              </ToolStack>
            </PanelBody>
            <PanelTitle>Местоположение проекта</PanelTitle>
          </Panel>
          <Anchor>
            <CollapsedPanel on label="Вариант..." icon={<OptionSheet />} />
            <Flyout>
              <FlyoutTool>
                <IconSlot $h={28}><OptionSheet /></IconSlot>Варианты<br />конструкции
              </FlyoutTool>
              <FlyoutColumn>
                <FlyoutButton disabled><AddToSet />Добавить в набор</FlyoutButton>
                <FlyoutButton $on><PickToEdit />Выбрать для редактирования</FlyoutButton>
                <ComboWrap>
                  <Combo aria-haspopup="listbox" aria-expanded="true">{'Вариант 1  <основн...'}<Caret w={7} /></Combo>
                  <Options role="listbox" aria-label="Активный вариант">
                    <Option role="option" $kind="hover">Главная модель</Option>
                    <Option role="presentation" $kind="group">Варианты планировок</Option>
                    <Option role="option" aria-selected="true" $kind="current">{'Вариант 1  <основной>'}</Option>
                    <Option role="option">Вариант 2</Option>
                    <Option role="option">Вариант 3</Option>
                  </Options>
                </ComboWrap>
              </FlyoutColumn>
            </Flyout>
          </Anchor>
          <CollapsedPanel label="Генерат..." icon={<Generative />} />
          <CollapsedPanel label="Управл..." icon={<ManageProject />} />
          <Panel $w={41} $plain>
            <PanelBody><BigTool $w={40}><IconSlot><Phases /></IconSlot>Стадии</BigTool></PanelBody>
            <PanelTitle>Стадии</PanelTitle>
          </Panel>
          <CollapsedPanel label="Выбор..." icon={<Selection />} />
          <CollapsedPanel label="Сведения" icon={<Barcode />} />
          <CollapsedPanel label="Макросы" icon={<Macros />} />
          <CollapsedPanel label="Визуаль..." icon={<Dynamo />} />
        </Ribbon>

        <OptionsBar />

        <Workspace>
          <Palette>
            <PaletteHead>Свойства<Cross /></PaletteHead>
            <TypeBox>
              <Thumb><PlanThumb /></Thumb>
              <TypeName>План этажа</TypeName>
              <Caret w={6} />
            </TypeBox>
            <InstanceRow>
              <SelectBox $w={256}>
                <PlainSelect aria-label="Вид"><option>План этажа: Уровень 1</option></PlainSelect>
                <Chevron />
              </SelectBox>
              <EditType><TypeIcon />Изменить тип</EditType>
            </InstanceRow>
            <GridArea>
              <PropTable>
                <colgroup><col width="142" /><col width="178" /><col width="10" /></colgroup>
                <tbody>{rows.map((r, i) => <PropertyRow key={i} row={r} id={`prop-${i}`} />)}</tbody>
              </PropTable>
              <ScrollTrack><ScrollThumb /></ScrollTrack>
            </GridArea>
            <PaletteFoot>
              <HelpLink href="#help">Справка по свойствам</HelpLink>
              <Apply disabled>Применить</Apply>
            </PaletteFoot>
          </Palette>
          <Document>
            <DocTabs>
              <DocTab><PlanTab /><DocName>Уровень 1</DocName><Cross s={8} /></DocTab>
            </DocTabs>
            <Canvas><FloorPlan /></Canvas>
            <ViewBar>
              <Scale>1 : 100</Scale>
              {viewIcons.map((v, i) => (
                <ViewTool key={i} aria-label={`Управление видом ${i + 1}`}><Icon w={14} h={13}>{v}</Icon></ViewTool>
              ))}
              <Minus />
            </ViewBar>
          </Document>
        </Workspace>

        <Status>
          <Prompt>Выберите элемент для редактирования его опции.</Prompt>
          <StatusIcon $w={21}><StatusHand /></StatusIcon>
          <SelectBox $w={170}><PlainSelect aria-label="Рабочий набор" /><Chevron /></SelectBox>
          <StatusIcon $w={22}><FilterOff /></StatusIcon>
          <Count>:0</Count>
          <StatusIcon $w={18}><StatusSheet /></StatusIcon>
          <StatusIcon $w={22}><PickStatus /></StatusIcon>
          <SelectBox $w={172}>
            <PlainSelect aria-label="Вариант"><option>Вариант 1 &nbsp;&lt;основной&gt;</option></PlainSelect>
            <Chevron />
          </SelectBox>
        </Status>
      </Window>

      <Frame $x={438} $y={27} $w={73} $h={90} />
      <Frame $x={511} $y={174} $w={178} $h={127} />
      <Step $x={802} $y={135}>1</Step>
      <Step $x={398} $y={70}>2</Step>
      <Step $x={451} $y={256}>3</Step>
      <ArrowMark width="49" height="93" viewBox="0 0 49 93" fill="none" stroke={RED} strokeWidth="5" strokeLinejoin="round">
        <path d="M24.500 4L3.500 46.500h10v41.500h21.500v-41.500h10.500z" />
      </ArrowMark>
    </Shell>
  );
}
